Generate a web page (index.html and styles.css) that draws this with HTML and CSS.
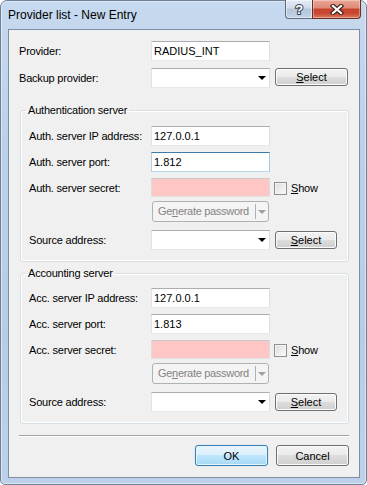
FILE: index.html
```html
<!DOCTYPE html>
<html lang="en">
  <head>
    <meta charset="UTF-8" />
    <title>Provider list - New Entry</title>
    <link rel="stylesheet" href="styles.css">
  </head>
  <body>
    <div class="window">
      <div class="titlebar">
        <span class="title">Provider list - New Entry</span>
        <div class="caption-buttons">
          <span class="caption-btn help">
            <svg width="12" height="14" viewBox="0 0 12 14">
              <text x="6" y="12" text-anchor="middle">?</text>
            </svg>
          </span>
          <span class="caption-btn close">
            <svg width="14" height="11" viewBox="0 0 14 11">
              <path class="x-outline" d="M3 2l8 7M11 2l-8 7" />
              <path class="x-fill" d="M3 2l8 7M11 2l-8 7" />
            </svg>
          </span>
        </div>
      </div>

      <div class="client">
        <div class="row">
          <span class="label">Provider:</span>
          <div class="edit">RADIUS_INT</div>
        </div>
        <div class="row gap-7">
          <span class="label">Backup provider:</span>
          <div class="edit combo"><span class="arrow"></span></div>
          <span class="btn select wide"><u>S</u>elect</span>
        </div>

        <fieldset class="group first">
          <legend>Authentication server</legend>
          <div class="row">
            <span class="label">Auth. server IP address:</span>
            <div class="edit">127.0.0.1</div>
          </div>
          <div class="row gap-6">
            <span class="label">Auth. server port:</span>
            <div class="edit focused">1.812</div>
          </div>
          <div class="row gap-6 short">
            <span class="label">Auth. server secret:</span>
            <div class="edit secret"></div>
            <span class="checkbox"></span>
            <span class="check-label"><u>S</u>how</span>
          </div>
          <div class="row gap-4 tall">
            <span class="label"></span>
            <div class="split disabled">
              <span class="split-text">Ge<u>n</u>erate password</span>
              <span class="split-arrow"><span class="arrow"></span></span>
            </div>
          </div>
          <div class="row gap-8">
            <span class="label">Source address:</span>
            <div class="edit combo"><span class="arrow"></span></div>
            <span class="btn select"><u>S</u>elect</span>
          </div>
        </fieldset>

        <fieldset class="group second">
          <legend>Accounting server</legend>
          <div class="row">
            <span class="label">Acc. server IP address:</span>
            <div class="edit">127.0.0.1</div>
          </div>
          <div class="row gap-6">
            <span class="label">Acc. server port:</span>
            <div class="edit">1.813</div>
          </div>
          <div class="row gap-6 short">
            <span class="label">Acc. server secret:</span>
            <div class="edit secret"></div>
            <span class="checkbox"></span>
            <span class="check-label"><u>S</u>how</span>
          </div>
          <div class="row gap-4 tall">
            <span class="label"></span>
            <div class="split disabled">
              <span class="split-text">Ge<u>n</u>erate password</span>
              <span class="split-arrow"><span class="arrow"></span></span>
            </div>
          </div>
          <div class="row gap-8">
            <span class="label">Source address:</span>
            <div class="edit combo"><span class="arrow"></span></div>
            <span class="btn select"><u>S</u>elect</span>
          </div>
        </fieldset>

        <div class="separator"></div>

        <div class="dialog-buttons">
          <span class="btn push default">OK</span>
          <span class="btn push">Cancel</span>
        </div>
      </div>
    </div>
  </body>
</html>
```

FILE: styles.css
```css
:root {
  --face-color: #f0f0f0;
  --text-color: #000000;
  --disabled-color: #838383;
  --frame-border: #6e8096;
  --client-border: #7d8ea3;
}

html,
body {
  margin: 0;
}

body {
  font-family: "Liberation Sans", Arial, sans-serif;
  font-size: 11px;
  letter-spacing: -0.2px;
  color: var(--text-color);
  background: #ffffff;
}

u {
  text-decoration: underline;
  text-underline-offset: 1px;
}

/* window frame */
.window {
  box-sizing: border-box;
  width: 367px;
  height: 485px;
  display: flex;
  flex-direction: column;
  padding: 0 6px 6px 7px;
  border: 1px solid var(--frame-border);
  border-radius: 7px 7px 5px 5px;
  background: linear-gradient(#c6d9ee, #bcd1e9 30%, #b7cde7 70%, #bdd2ea);
  box-shadow: inset 0 0 0 1px rgba(255, 255, 255, 0.45);
}

.titlebar {
  height: 28px;
  display: flex;
  align-items: flex-start;
  flex: none;
}

.title {
  margin-top: 7px;
  font-size: 12px;
  line-height: 15px;
  letter-spacing: 0;
}

.caption-buttons {
  display: flex;
  margin-left: auto;
  margin-top: -1px;
  margin-right: -1px;
}

.caption-btn {
  box-sizing: border-box;
  height: 19px;
  display: flex;
  align-items: center;
  justify-content: center;
  border: 1px solid #5d6b7c;
  border-top: none;
}

.help {
  width: 27px;
  border-right: none;
  border-radius: 0 0 0 4px;
  background: linear-gradient(#e3ebf5, #d2dcea 45%, #b6c6d9 50%, #c3d3e6);
  box-shadow: inset 0 0 0 1px rgba(255, 255, 255, 0.5);
}

.help text {
  font-family: "Liberation Sans", Arial, sans-serif;
  font-size: 13px;
  font-weight: bold;
  fill: #ffffff;
  stroke: #3b4656;
  stroke-width: 2px;
  paint-order: stroke;
}

.close {
  width: 49px;
  border-color: #6a2e25;
  border-radius: 0 0 4px 0;
  background: linear-gradient(#eba595, #de8a78 45%, #c8402a 50%, #c94a33 75%, #dc7a5e);
  box-shadow: inset 0 0 0 1px rgba(255, 255, 255, 0.35);
}

.close path {
  fill: none;
  stroke-linecap: square;
}

.x-outline {
  stroke: #3c2520;
  stroke-width: 4.4px;
}

.x-fill {
  stroke: #ffffff;
  stroke-width: 2.2px;
}

/* client area */
.client {
  flex: 1;
  display: flex;
  flex-direction: column;
  padding: 11px 10px 0 10px;
  background: var(--face-color);
  border: 1px solid var(--client-border);
}

.row {
  display: flex;
  align-items: flex-start;
  height: 20px;
  line-height: 20px;
}

.row.short {
  height: 19px;
}

.row.tall {
  height: 21px;
}

.gap-4 {
  margin-top: 4px;
}
.gap-6 {
  margin-top: 6px;
}
.gap-7 {
  margin-top: 7px;
}
.gap-8 {
  margin-top: 8px;
}

.label {
  width: 132px;
  flex: none;
  white-space: nowrap;
}

.group .label {
  width: 122px;
}

.edit {
  box-sizing: border-box;
  width: 119px;
  height: 20px;
  flex: none;
  padding-left: 2px;
  line-height: 18px;
  letter-spacing: 0;
  background: #ffffff;
  border: 1px solid;
  border-color: #abadb3 #dbdfe6 #e3e9ef #e2e3ea;
}

.edit.focused {
  border-color: #3d7bad #a4c9e3 #b7d9ed #b5cfe7;
}

.edit.secret {
  height: 19px;
  background: #ffc6c6;
  border-color: #c9c9c9 #dcdcdc #e3e3e3 #dcdcdc;
}

.combo {
  display: flex;
  align-items: center;
  justify-content: flex-end;
  padding-right: 3px;
}

.arrow {
  width: 0;
  height: 0;
  border-left: 4px solid transparent;
  border-right: 4px solid transparent;
  border-top: 4px solid #000000;
}

/* push buttons */
.btn {
  box-sizing: border-box;
  display: flex;
  align-items: center;
  justify-content: center;
  flex: none;
  letter-spacing: 0;
  border: 1px solid #707070;
  border-radius: 3px;
  background: linear-gradient(#f2f2f2, #ebebeb 50%, #dddddd 50%, #cfcfcf);
  box-shadow: inset 0 0 0 1px #fbfbfb;
}

.select {
  width: 62px;
  height: 18px;
  margin: 1px 0 0 5px;
  line-height: 16px;
}

.select.wide {
  width: 73px;
  margin-top: 0;
}

/* checkbox */
.checkbox {
  box-sizing: border-box;
  width: 13px;
  height: 13px;
  flex: none;
  margin: 4px 0 0 4px;
  border: 1px solid #8e8f8f;
  background: linear-gradient(135deg, #dcdcdc, #fbfbfb);
  box-shadow: inset 0 0 0 1px #f4f4f4;
}

.check-label {
  margin-left: 4px;
  line-height: 20px;
}

/* disabled split button */
.split {
  box-sizing: border-box;
  width: 117px;
  height: 21px;
  margin-left: 1px;
  display: flex;
  border: 1px solid #adb2b5;
  border-radius: 3px;
  background: #f4f4f4;
  color: var(--disabled-color);
  line-height: 19px;
  letter-spacing: -0.3px;
}

.split-text {
  flex: 1;
  padding-left: 5px;
  white-space: nowrap;
}

.split-arrow {
  width: 12px;
  display: flex;
  align-items: center;
  justify-content: center;
  margin: 2px 0;
  border-left: 1px solid #adb2b5;
}

.split-arrow .arrow {
  border-top-color: #a0a0a0;
  border-left-width: 4px;
  border-right-width: 4px;
}

/* group boxes */
.group {
  margin: 15px 0 0 1px;
  padding: 9px 8px 11px 8px;
  border: 1px solid #d5dfe5;
  border-radius: 3px;
  box-shadow: inset 0 0 0 1px #ffffff;
}

.group.second {
  margin-top: 4px;
  padding-top: 8px;
}

.group legend {
  margin-left: -3px;
  padding: 0 2px;
  line-height: 14px;
}

.separator {
  margin: 11px 0 0 0;
  border-top: 1px solid #a0a0a0;
  border-bottom: 1px solid #ffffff;
}

.dialog-buttons {
  display: flex;
  justify-content: flex-end;
  gap: 8px;
  margin-top: 8px;
}

.push {
  width: 73px;
  height: 21px;
}

.push.default {
  border-color: #3c7fb1;
  background: linear-gradient(#eaf6fd, #d9f0fc 50%, #bee6fd 50%, #a7d9f5);
  box-shadow: inset 0 0 0 1px #e3f4fc, 0 0 1px #7fc4ef;
}
```
